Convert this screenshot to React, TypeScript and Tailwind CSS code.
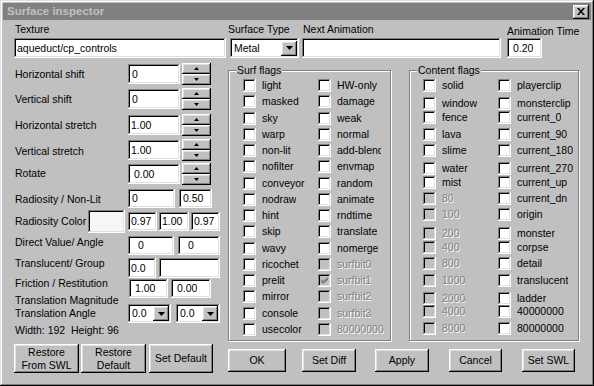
const raised = "shadow-[inset_-1px_-1px_#000,inset_1px_1px_#fff,inset_-2px_-2px_#808080,inset_2px_2px_#dfdfdf]";
const sunken = "shadow-[inset_-1px_-1px_#fff,inset_1px_1px_#808080,inset_-2px_-2px_#dfdfdf,inset_2px_2px_#000]";
const dim = "text-[#808080] [text-shadow:1px_1px_0_#fff]";

const surfFlags: [string, string, boolean?, boolean?][] = [
    ["light", "HW-only"],
    ["masked", "damage"],
    ["sky", "weak"],
    ["warp", "normal"],
    ["non-lit", "add-blend"],
    ["nofilter", "envmap"],
    ["conveyor", "random"],
    ["nodraw", "animate"],
    ["hint", "rndtime"],
    ["skip", "translate"],
    ["wavy", "nomerge"],
    ["ricochet", "surfbit0", true],
    ["prelit", "surfbit1", true, true],
    ["mirror", "surfbit2", true],
    ["console", "surfbit3", true],
    ["usecolor", "80000000", true],
];

// rows in the content group are not evenly spaced
const contentFlags: [string, string, string, boolean?][] = [
    ["h-[18px]", "solid", "playerclip"],
    ["h-[14px]", "window", "monsterclip"],
    ["h-[17px]", "fence", "current_0"],
    ["h-[16px]", "lava", "current_90"],
    ["h-[18px]", "slime", "current_180"],
    ["h-[14px]", "water", "current_270"],
    ["h-[16px]", "mist", "current_up"],
    ["h-[16px]", "80", "current_dn", true],
    ["h-[19px]", "100", "origin", true],
    ["h-[14px]", "200", "monster", true],
    ["h-[16px]", "400", "corpse", true],
    ["h-[17px]", "800", "detail", true],
    ["h-[18px]", "1000", "translucent", true],
    ["h-[13px]", "2000", "ladder", true],
    ["h-[17px]", "4000", "40000000", true],
    ["h-[16px]", "8000", "80000000", true],
];

const Field = ({ value = "", className = "" }: { value?: string; className?: string }) => (
    <div className={`${sunken} bg-white flex items-center leading-none whitespace-nowrap overflow-hidden ${className}`}>{value}</div>
);

const DownArrow = () => (
    <svg width="7" height="4" viewBox="0 0 7 4"><path d="M0 0h7L3.5 4z" fill="#000"/></svg>
);

const Dropdown = ({ value, className = "" }: { value: string; className?: string }) => (
    <div className={`${sunken} bg-white flex items-center justify-between pl-[4px] pr-[2px] leading-none ${className}`}>
        <span>{value}</span>
        <div className={`${raised} bg-[#c0c0c0] w-[16px] h-[15px] flex items-center justify-center`}><DownArrow/></div>
    </div>
);

const Spin = () => (
    <div className="flex flex-col ml-[2px]">
        <div className={`${raised} bg-[#c0c0c0] w-[29px] h-[11px] flex items-center justify-center`}>
            <svg width="5" height="3" viewBox="0 0 5 3"><path d="M2.5 0L5 3H0z" fill="#000"/></svg>
        </div>
        <div className={`${raised} bg-[#c0c0c0] w-[29px] h-[11px] flex items-center justify-center`}>
            <svg width="5" height="3" viewBox="0 0 5 3"><path d="M0 0h5L2.5 3z" fill="#000"/></svg>
        </div>
    </div>
);

const Check = ({ label, off, on, className = "w-[75px] shrink-0", clip = "" }: { label: string; off?: boolean; on?: boolean; className?: string; clip?: string }) => (
    <div className={`flex items-center h-[13px] ${className}`}>
        <div className={`${sunken} ${off ? "bg-[#c0c0c0]" : "bg-white"} w-[13px] h-[13px] shrink-0 flex items-center justify-center`}>
            {on && <svg width="7" height="7" viewBox="0 0 7 7"><path d="M0 2l2 2 5-4v3L2 7 0 5z" fill="#808080"/></svg>}
        </div>
        <span className={`ml-[6px] leading-[13px] whitespace-nowrap overflow-hidden shrink-0 ${clip} ${off ? dim : ""}`}>{label}</span>
    </div>
);

const Group = ({ title, className, children }: { title: string; className: string; children: React.ReactNode }) => (
    <div className={`relative border border-[#808080] shadow-[1px_1px_0_#fff,inset_1px_1px_0_#fff] pt-[8px] ${className}`}>
        <span className="absolute left-[7px] -top-[7px] px-[1px] bg-[#c0c0c0] leading-[13px]">{title}</span>
        {children}
    </div>
);

const Button = ({ children, className }: { children: React.ReactNode; className: string }) => (
    <div className={`${raised} bg-[#c0c0c0] flex items-center justify-center text-center leading-[13px] ${className}`}>{children}</div>
);

export default function App() {
    return (
        <div className="w-[594px] h-[386px] bg-[#c0c0c0] p-[3px] text-[10.5px] text-black font-['Liberation_Sans',Arial,sans-serif] shadow-[inset_-1px_-1px_#000,inset_1px_1px_#dfdfdf,inset_-2px_-2px_#808080,inset_2px_2px_#fff]">
            <div className="h-[17px] bg-[#808080] flex items-center justify-between pl-[4px] pr-[2px]">
                <span className="font-bold text-[#c0c0c0] text-[11.5px]">Surface inspector</span>
                <div className={`${raised} bg-[#c0c0c0] w-[16px] h-[14px] flex items-center justify-center`}>
                    <svg width="8" height="7" viewBox="0 0 8 7"><path d="M0 0h2l2 2.5L6 0h2L5 3.5 8 7H6L4 4.5 2 7H0l3-3.5z" fill="#000"/></svg>
                </div>
            </div>

            <div className="pl-[11px]">
                <div className="flex items-start">
                    <div className="w-[212px]">
                        <div className="mt-[3px] pl-[1px] leading-[13px]">Texture</div>
                        <Field value="aqueduct/cp_controls" className="mt-[2px] h-[20px] pl-[3px]"/>
                    </div>
                    <div className="ml-[4px] w-[69px]">
                        <div className="mt-[3px] -ml-[2px] leading-[13px] whitespace-nowrap">Surface Type</div>
                        <Dropdown value="Metal" className="mt-[2px] h-[20px]"/>
                    </div>
                    <div className="ml-[3px] w-[199px]">
                        <div className="mt-[3px] pl-[1px] leading-[13px]">Next Animation</div>
                        <Field className="mt-[2px] h-[20px]"/>
                    </div>
                    <div className="ml-[6px]">
                        <div className="mt-[5px] leading-[13px] whitespace-nowrap">Animation Time</div>
                        <Field value="0.20" className="w-[35px] h-[20px] pl-[6px]"/>
                    </div>
                </div>

                <div className="flex items-start mt-[5px]">
                    <div className="w-[206px] flex flex-col">
                        <div className="flex h-[25px]">
                            <div className="w-[114px] pl-[1px] pt-[5px] leading-[13px]">Horizontal shift</div>
                            <Field value="0" className="mt-[1px] w-[52px] h-[20px] pl-[4px]"/>
                            <Spin/>
                        </div>
                        <div className="flex h-[26px]">
                            <div className="w-[114px] pl-[1px] pt-[5px] leading-[13px]">Vertical shift</div>
                            <Field value="0" className="mt-[1px] w-[52px] h-[20px] pl-[4px]"/>
                            <Spin/>
                        </div>
                        <div className="flex h-[25px]">
                            <div className="w-[114px] pl-[1px] pt-[5px] leading-[13px]">Horizontal stretch</div>
                            <Field value="1.00" className="mt-[1px] w-[52px] h-[20px] pl-[3px]"/>
                            <Spin/>
                        </div>
                        <div className="flex h-[24px]">
                            <div className="w-[114px] pl-[1px] pt-[6px] leading-[13px]">Vertical stretch</div>
                            <Field value="1.00" className="mt-[1px] w-[52px] h-[20px] pl-[3px]"/>
                            <Spin/>
                        </div>
                        <div className="flex h-[25px]">
                            <div className="w-[114px] pl-[1px] pt-[4px] leading-[13px]">Rotate</div>
                            <Field value="0.00" className="mt-[1px] w-[52px] h-[20px] pl-[6px]"/>
                            <Spin/>
                        </div>
                        <div className="flex h-[21px]">
                            <div className="w-[114px] pl-[1px] pt-[5px] leading-[13px]">Radiosity / Non-Lit</div>
                            <Field value="0" className="mt-[1px] w-[47px] h-[19px] pl-[4px]"/>
                            <Field value="0.50" className="mt-[1px] ml-[4px] w-[33px] h-[19px] pl-[4px]"/>
                        </div>
                        <div className="flex items-center h-[24px]">
                            <div className="w-[74px] pl-[1px] leading-[13px] whitespace-nowrap">Radiosity Color</div>
                            <div className={`${sunken} bg-[#f4f7f4] w-[37px] h-[23px]`}/>
                            <Field value="0.97" className="ml-[3px] w-[29px] h-[19px] pl-[3px]"/>
                            <Field value="1.00" className="ml-[2px] w-[30px] h-[19px] pl-[3px]"/>
                            <Field value="0.97" className="ml-[2px] w-[29px] h-[19px] pl-[3px]"/>
                        </div>
                        <div className="flex h-[23px]">
                            <div className="w-[114px] pl-[1px] pt-[3px] leading-[13px]">Direct Value/ Angle</div>
                            <Field value="0" className="mt-[3px] w-[46px] h-[19px] pl-[10px]"/>
                            <Field value="0" className="mt-[3px] ml-[4px] w-[42px] h-[19px] pl-[10px]"/>
                        </div>
                        <div className="flex h-[21px]">
                            <div className="w-[114px] pl-[1px] pt-[1px] leading-[13px]">Translucent/ Group</div>
                            <Field value="0.0" className="mt-[2px] w-[28px] h-[20px] pl-[3px]"/>
                            <Field className="mt-[2px] ml-[3px] w-[61px] h-[20px]"/>
                        </div>
                        <div className="flex h-[21px]">
                            <div className="w-[115px] pl-[1px] leading-[13px]">Friction / Restitution</div>
                            <Field value="1.00" className="mt-[2px] w-[39px] h-[19px] pl-[6px]"/>
                            <Field value="0.00" className="mt-[2px] ml-[3px] w-[40px] h-[19px] pl-[6px]"/>
                        </div>
                        <div className="flex h-[25px]">
                            <div className="w-[114px] pl-[1px] -mt-[4px] leading-[13px] whitespace-nowrap">Translation Magnitude<br/>Translation Angle</div>
                            <Dropdown value="0.0" className="mt-[6px] w-[43px] h-[19px]"/>
                            <Dropdown value="0.0" className="mt-[6px] ml-[5px] w-[44px] h-[19px]"/>
                        </div>
                        <div className="h-[15px] pt-[1px] pl-[1px] leading-[13px] whitespace-pre">Width: 192  Height: 96</div>
                        <div className="flex mt-[6px]">
                            <Button className="w-[65px] h-[29px]">Restore<br/>From SWL</Button>
                            <Button className="ml-[2px] w-[65px] h-[29px]">Restore<br/>Default</Button>
                            <Button className="ml-[3px] w-[64px] h-[29px]">Set Default</Button>
                        </div>
                    </div>

                    <div className="ml-[8px] mt-[7px] flex flex-col">
                        <div className="flex">
                            <Group title="Surf flags" className="w-[163px] h-[271px] pl-[14px]">
                                {surfFlags.map(([a, b, off, on]) => (
                                    <div key={a} className="flex items-start h-[16.25px]">
                                        <Check label={a}/>
                                        <Check label={b} off={off} on={on} className="" clip={b === "add-blend" ? "max-w-[44px]" : ""}/>
                                    </div>
                                ))}
                            </Group>
                            <Group title="Content flags" className="ml-[18px] w-[170px] h-[271px] pl-[13px]">
                                {contentFlags.map(([h, a, b, off]) => (
                                    <div key={a} className={`flex items-start ${h}`}>
                                        <Check label={a} off={off}/>
                                        <Check label={b} className=""/>
                                    </div>
                                ))}
                            </Group>
                        </div>
                        <div className="flex mt-[8px]">
                            <Button className="w-[58px] h-[23px]">OK</Button>
                            <Button className="ml-[16px] w-[54px] h-[23px]">Set Diff</Button>
                            <Button className="ml-[19px] w-[54px] h-[23px]">Apply</Button>
                            <Button className="ml-[20px] w-[53px] h-[23px]">Cancel</Button>
                            <Button className="ml-[20px] w-[53px] h-[23px]">Set SWL</Button>
                        </div>
                    </div>
                </div>
            </div>
        </div>
    )
}
